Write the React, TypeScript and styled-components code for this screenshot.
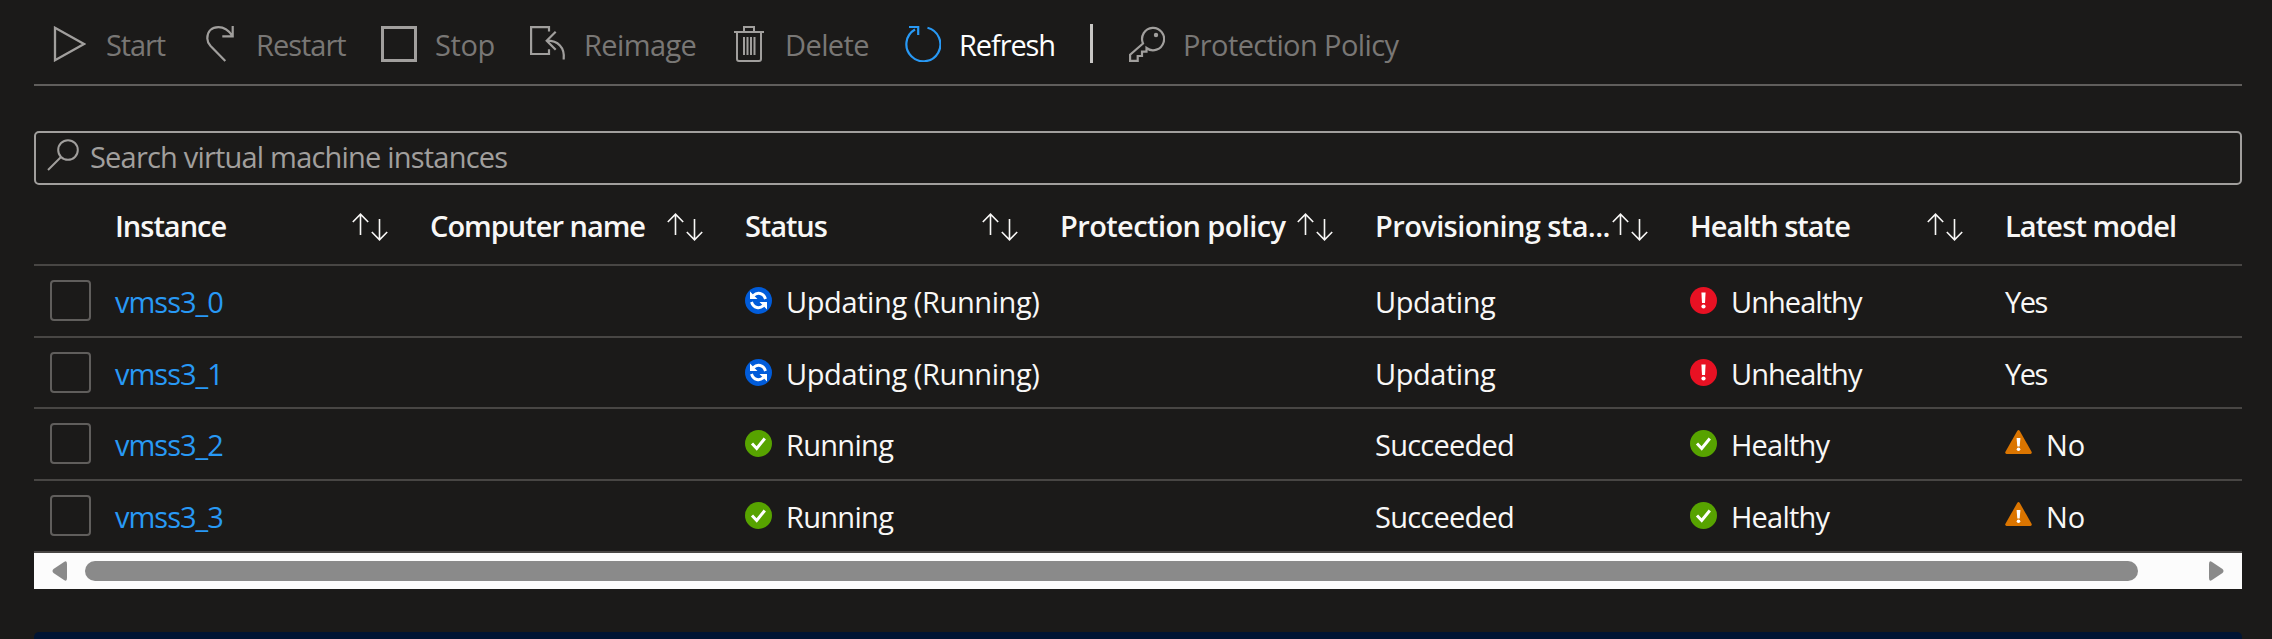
import React from "react";
import styled, { createGlobalStyle } from "styled-components";

const Global = createGlobalStyle`
  * { box-sizing: border-box; }
  html, body { margin: 0; background: #1b1a19; }
  body { font-family: "Open Sans", "Noto Sans", sans-serif; font-size: 29px; line-height: 40px; color: #f8f7f6; overflow: hidden; }
`;

const Page = styled.main`
  height: 639px;
  padding: 0 30px 0 34px;
  display: flex;
  flex-direction: column;
  overflow: hidden;
`;
const Toolbar = styled.div`
  height: 86px;
  flex: none;
  border-bottom: 2px solid #605e5c;
  padding: 24px 16px 0;
  display: flex;
  align-items: flex-start;
  gap: 36px;
`;
const Command = styled.button<{ $on?: boolean }>`
  all: unset;
  display: flex;
  gap: 18px;
  color: ${(p) => (p.$on ? "#ffffff" : "#797775")};
  svg { margin-top: 2px; flex: none; color: ${(p) => (p.$on ? "#2899f5" : "#a19f9d")}; }
`;
const Label = styled.span<{ $w: number; $ls: number; $indent?: number }>`
  width: ${(p) => p.$w}px;
  padding-left: ${(p) => p.$indent ?? 0}px;
  letter-spacing: ${(p) => p.$ls}px;
  white-space: nowrap;
  margin-top: 1px;
`;
const Divider = styled.span`
  width: 3px;
  height: 39px;
  background: #c8c6c4;
`;
const Search = styled.div`
  margin-top: 45px;
  height: 54px;
  flex: none;
  border: 2px solid #a19f9d;
  border-radius: 5px;
  display: flex;
  padding: 4px 11px 0;
  gap: 11px;
  color: #a19f9d;
  svg { flex: none; margin-top: 2px; }
`;
const Text = styled.span<{ $ls?: number }>`
  letter-spacing: ${(p) => p.$ls ?? 0}px;
  white-space: nowrap;
`;
const Row = styled.div<{ $h: number; $pad: number }>`
  height: ${(p) => p.$h}px;
  flex: none;
  display: grid;
  grid-template-columns: 81px repeat(6, 315px) 1fr;
  padding-top: ${(p) => p.$pad}px;
  border-bottom: 2px solid #484644;
`;
const HeadCell = styled.div`
  display: flex;
  justify-content: space-between;
  padding-right: 42px;
  font-weight: 600;
  span { min-width: 0; }
  svg { flex: none; margin-top: 7px; }
`;
const Cell = styled.div<{ $link?: boolean }>`
  display: flex;
  gap: 14px;
  color: ${(p) => (p.$link ? "#2899f5" : "inherit")};
  svg { flex: none; margin-top: 5px; }
`;
const Check = styled.span`
  width: 41px;
  height: 41px;
  margin: -2px 0 0 16px;
  border: 2px solid #605e5c;
  border-radius: 4px;
`;
const ScrollBar = styled.div`
  height: 36px;
  flex: none;
  background: #fcfcfc;
  padding: 8px 18px;
  display: flex;
  justify-content: space-between;
`;
const Thumb = styled.span`
  flex: 1;
  margin: 0 71px 0 18px;
  border-radius: 10px;
  background: #8a8a8a;
`;
const Footer = styled.div`
  margin-top: 43px;
  height: 20px;
  flex: none;
  border-radius: 5px 5px 0 0;
  background: #001433;
`;

const Icon = ({ children }: { children: React.ReactNode }) => (
  <svg width="36" height="36" viewBox="0 0 36 36" fill="none" stroke="currentColor" strokeWidth="2.2">
    {children}
  </svg>
);

const commands = [
  { name: "Start", w: 62, ls: -1.1, indent: 2, icon: <path d="M5 1.8V34.2L34 18Z" strokeWidth="2.3" /> },
  { name: "Restart", w: 89, ls: -1, icon: <path d="M23.3 35L8.600 20C6 17 5.300 15.500 5.300 12.500C5.300 5 10 1.200 16.500 1.200C23 1.200 27 5 30 9.500M20.300 10.300H30.700V0" /> },
  { name: "Stop", w: 59, ls: -0.4, icon: <path d="M1.500 1.500H34.500V34.500H1.500Z" strokeWidth="3" /> },
  { name: "Reimage", w: 111, ls: -0.6, icon: <path d="M19 5.500V1.100H1.100V28H19V23.300M25.700 5.700L16.700 14.700L25.700 23.700M16.700 14.700C28 14.700 35 21 33.700 33.500" /> },
  { name: "Delete", w: 84, ls: -0.6, icon: <path d="M3 6H33M6 6V33Q6 35 8 35H28Q30 35 30 33V6M13 6V1H23V6M13 11V29M16.500 11V29M20 11V29M23.500 11V29" strokeWidth="2" /> },
  { name: "Refresh", w: 95, ls: -1.1, on: true, icon: <path d="M10 3.500A17 17 0 1 0 22.500 1.800M4 1H13.200V9" /> },
];

const SortIcon = () => (
  <svg width="36" height="28" viewBox="0 0 36 28" fill="none" stroke="currentColor" strokeWidth="1.600">
    <path d="M8.500 22V1M.8 9L8.500 1.200L16.200 9M27.500 6V27M19.800 19L27.500 26.800L35.200 19" />
  </svg>
);
const Status = ({ kind }: { kind: string }) => (
  <svg width="27" height="27" viewBox="0 0 27 27">
    {kind === "sync" && (
      <g>
        <circle cx="13.500" cy="13.500" r="13.500" fill="#015cda" />
        <path d="M8.500 8.500C12 5 18.500 5.500 20.500 12M18.500 18.500C15 22 8.500 21.500 6.500 15" stroke="#fff" strokeWidth="2.900" fill="none" />
        <path d="M5 4.500V12H12.500ZM22 22.500V15H14.500Z" fill="#fff" />
      </g>
    )}
    {kind === "ok" && (
      <g>
        <circle cx="13.500" cy="13.500" r="13.500" fill="#57a300" />
        <path d="M7 13.500L11.700 18.500L19.800 8.500" stroke="#fff" strokeWidth="3" fill="none" />
      </g>
    )}
    {kind === "error" && (
      <g>
        <circle cx="13.500" cy="13.500" r="13.500" fill="#e81123" />
        <path d="M11.400 5.500H15.600L15 16H12Z" fill="#fff" />
        <circle cx="13.500" cy="19.500" r="2.100" fill="#fff" />
      </g>
    )}
    {kind === "warn" && (
      <g>
        <path d="M12.200 1Q13.500-1 14.800 1L26.700 22Q27 24 25.500 24H1.500Q0 24 .3 22Z" fill="#db7500" />
        <path d="M11.600 8H15.400L14.700 16.500H12.300Z" fill="#fff" />
        <circle cx="13.500" cy="19.300" r="1.800" fill="#fff" />
      </g>
    )}
  </svg>
);

const heads = [
  { t: "Instance", ls: -1 },
  { t: "Computer name", ls: -1 },
  { t: "Status", ls: -1.1 },
  { t: "Protection policy", ls: -0.6 },
  { t: "Provisioning sta...", ls: -0.6 },
  { t: "Health state", ls: -0.95 },
];
const rows = [
  { id: "vmss3_0", h: 72, up: true },
  { id: "vmss3_1", h: 71, up: true },
  { id: "vmss3_2", h: 72, up: false },
  { id: "vmss3_3", h: 72, up: false },
];

export default function App() {
  return (
    <Page>
      <Global />
      <Toolbar>
        {commands.map((c) => (
          <Command key={c.name} $on={c.on}>
            <Icon>{c.icon}</Icon>
            <Label $w={c.w} $ls={c.ls} $indent={c.indent}>{c.name}</Label>
          </Command>
        ))}
        <Divider />
        <Command>
          <Icon>
            <path d="M14 17.500A11 11.200 0 1 1 17.500 22V25.700H13V30H8.700V34.900H1.100V28.700Z" />
            <circle cx="27" cy="9" r="2.200" fill="currentColor" stroke="none" />
          </Icon>
          <Label $w={215} $ls={-0.6}>Protection Policy</Label>
        </Command>
      </Toolbar>
      <Search>
        <svg width="32" height="32" viewBox="0 0 32 32" fill="none" stroke="currentColor" strokeWidth="2">
          <circle cx="21" cy="11" r="9.800" /><path d="M14 18L1 31" />
        </svg>
        <Text $ls={-0.8}>Search virtual machine instances</Text>
      </Search>
      <Row $h={81} $pad={21}>
        <span />
        {heads.map((h) => (
          <HeadCell key={h.t}><Text $ls={h.ls}>{h.t}</Text><SortIcon /></HeadCell>
        ))}
        <HeadCell><Text $ls={-0.9}>Latest model</Text></HeadCell>
      </Row>
      {rows.map((r) => (
        <Row key={r.id} $h={r.h} $pad={16}>
          <Check />
          <Cell $link><Text $ls={-1}>{r.id}</Text></Cell>
          <span />
          <Cell><Status kind={r.up ? "sync" : "ok"} /><Text $ls={r.up ? -0.4 : -0.7}>{r.up ? "Updating (Running)" : "Running"}</Text></Cell>
          <span />
          <Cell><Text $ls={r.up ? -0.45 : -0.75}>{r.up ? "Updating" : "Succeeded"}</Text></Cell>
          <Cell><Status kind={r.up ? "error" : "ok"} /><Text $ls={r.up ? -0.95 : -0.8}>{r.up ? "Unhealthy" : "Healthy"}</Text></Cell>
          <Cell>{!r.up && <Status kind="warn" />}<Text $ls={r.up ? -1.5 : 0}>{r.up ? "Yes" : "No"}</Text></Cell>
        </Row>
      ))}
      <ScrollBar>
        <svg width="15" height="20"><path d="M12 1Q15-1 15 3V17Q15 21 12 19L1.500 12Q-.5 10 1.500 8Z" fill="#8a8a8a" /></svg>
        <Thumb />
        <svg width="15" height="20"><path d="M3 1Q0-1 0 3V17Q0 21 3 19L13.500 12Q15.500 10 13.500 8Z" fill="#8a8a8a" /></svg>
      </ScrollBar>
      <Footer />
    </Page>
  );
}
